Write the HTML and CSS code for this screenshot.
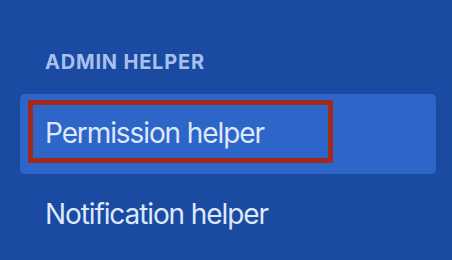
FILE: index.html
```html
<!DOCTYPE html>
<html>
<head>
<meta charset="utf-8">
<link rel="stylesheet" href="styles.css">
</head>
<body>
<nav class="sidebar">
  <div class="section-title">ADMIN HELPER</div>
  <div class="item active">
    <div class="highlight">Permission helper</div>
  </div>
  <div class="item plain">Notification helper</div>
</nav>
</body>
</html>
```
FILE: styles.css
```css
html, body {
  margin: 0;
  padding: 0;
  width: 452px;
  height: 260px;
  overflow: hidden;
  background: #1a4aa1;
}
.sidebar {
  font-family: Inter, "Noto Sans", sans-serif;
  padding: 50px 16px 0 20px;
  box-sizing: border-box;
  width: 452px;
}
.section-title {
  font-size: 20px;
  font-weight: 700;
  line-height: 24px;
  letter-spacing: 0.8px;
  color: #a8c0ec;
  padding-left: 25px;
}
.item {
  font-size: 28px;
  line-height: 34px;
  letter-spacing: -1.1px;
  color: #dde8fb;
}
.active {
  margin-top: 20px;
  height: 80px;
  box-sizing: border-box;
  background: #2d65c9;
  border-radius: 5px;
  padding: 6px 0 0 8px;
}
.highlight {
  width: 305px;
  height: 63px;
  box-sizing: border-box;
  border: 5px solid #a4291d;
  padding: 11px 0 0 12px;
}
.plain {
  margin-top: 23px;
  padding-left: 25px;
}
```
